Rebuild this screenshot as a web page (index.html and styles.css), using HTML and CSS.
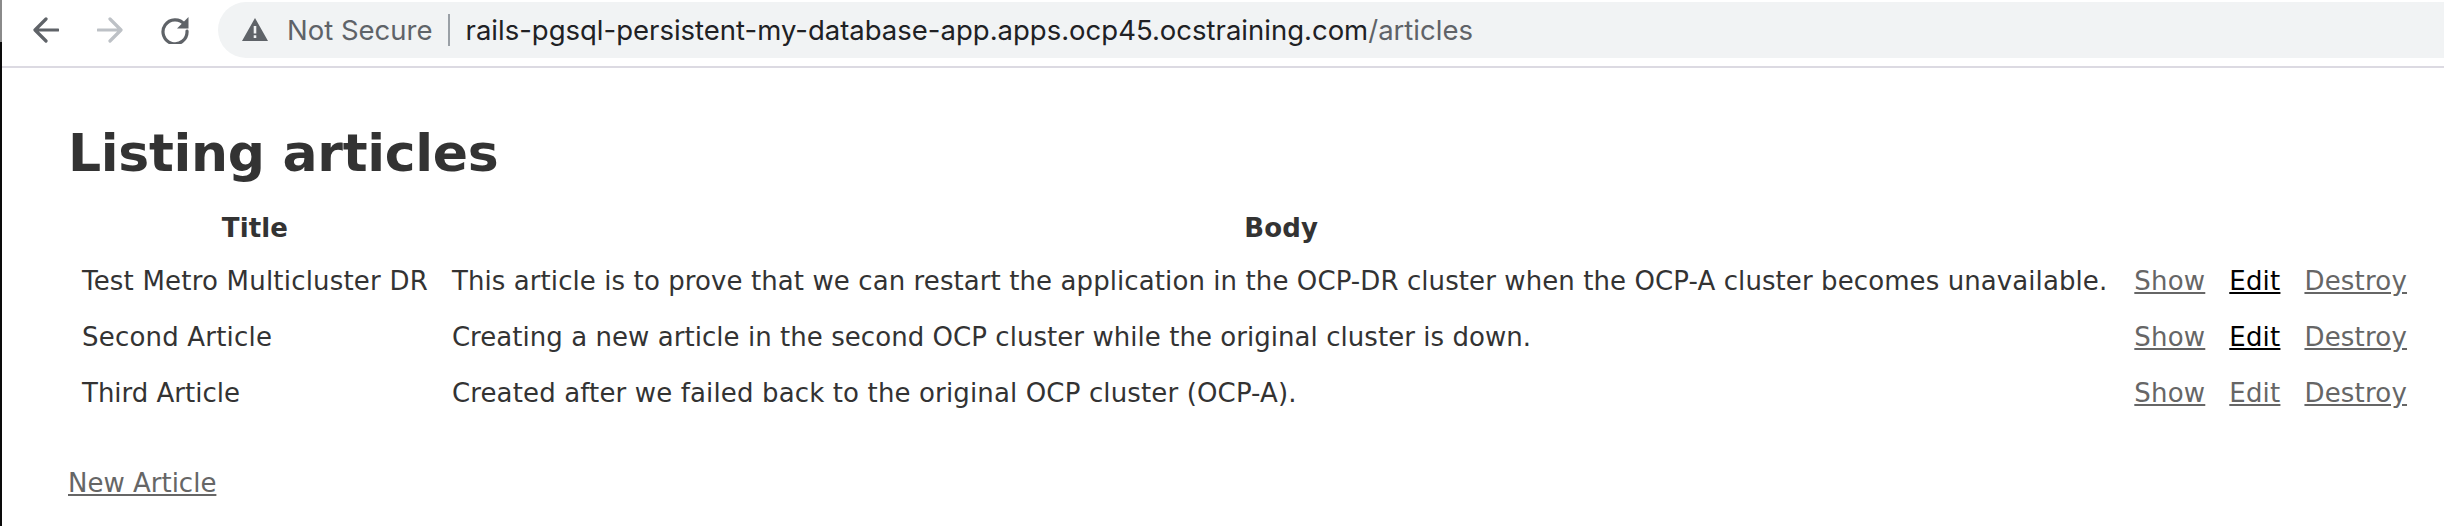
FILE: index.html
```html
<!DOCTYPE html>
<html lang="en">
<head>
<meta charset="utf-8">
<title>Listing articles</title>
<link rel="stylesheet" href="styles.css">
</head>
<body>
<div class="edge"></div>
<header class="toolbar">
  <svg class="nav-icon" viewBox="0 0 26 26" width="26" height="26"><path d="M25 13H2.5M13 2 2 13l11 11" class="stroke dark"/></svg>
  <svg class="nav-icon" viewBox="0 0 26 26" width="26" height="26"><path d="M1 13h22.5M13 2l11 11-11 11" class="stroke light"/></svg>
  <svg class="nav-icon" viewBox="0 0 28 28" width="28" height="28"><path d="M23.6 8.6A12 12 0 1 0 26 15" class="stroke dark"/><path d="M27.5 1v11.5H16z" class="fill-dark"/></svg>
  <div class="omnibox">
    <svg class="warn" viewBox="0 0 26 24" width="26" height="24"><path fill-rule="evenodd" d="M13 0 26 23H0zM11.7 8v7.5h2.6V8zm0 9.2v2.7h2.6v-2.7z" class="fill-dark"/></svg>
    <span class="secure">Not Secure</span>
    <span class="sep"></span>
    <span class="url">rails-pgsql-persistent-my-database-app.apps.ocp45.ocstraining.com<span class="path">/articles</span></span>
  </div>
</header>
<main class="content">
  <h1>Listing articles</h1>
  <table>
    <thead>
      <tr><th>Title</th><th>Body</th><th></th><th></th><th></th></tr>
    </thead>
    <tbody>
      <tr>
        <td class="title">Test Metro Multicluster DR</td>
        <td class="body-a">This article is to prove that we can restart the application in the OCP-DR cluster when the OCP-A cluster becomes unavailable.</td>
        <td class="action"><a href="#">Show</a></td>
        <td class="action"><a href="#" class="visited">Edit</a></td>
        <td class="action"><a href="#">Destroy</a></td>
      </tr>
      <tr>
        <td class="title">Second Article</td>
        <td class="body-b">Creating a new article in the second OCP cluster while the original cluster is down.</td>
        <td class="action"><a href="#">Show</a></td>
        <td class="action"><a href="#" class="visited">Edit</a></td>
        <td class="action"><a href="#">Destroy</a></td>
      </tr>
      <tr>
        <td class="title-c">Third Article</td>
        <td class="body-c">Created after we failed back to the original OCP cluster (OCP-A).</td>
        <td class="action"><a href="#">Show</a></td>
        <td class="action"><a href="#">Edit</a></td>
        <td class="action"><a href="#">Destroy</a></td>
      </tr>
    </tbody>
  </table>
  <p class="new"><a href="#">New Article</a></p>
</main>
</body>
</html>
```
FILE: styles.css
```css
html, body { margin: 0; padding: 0; background: #fff; height: 100%; overflow: hidden; }
body { font-family: "DejaVu Sans", sans-serif; color: #333; position: relative; }
.edge { position: absolute; left: 0; top: 0; bottom: 0; width: 2px; background: linear-gradient(#8a8a8a 0 42px, #0a0a0a 42px); z-index: 2; }
.toolbar { height: 60px; padding: 0 0 6px 33px; border-bottom: 2px solid #dcdae2; display: flex; align-items: center; }
.nav-icon { flex: none; margin-right: 38px; }
.nav-icon:nth-child(3) { margin-right: 29px; }
.stroke { fill: none; stroke-width: 3.2; stroke-linecap: round; stroke-linejoin: round; }
.dark { stroke: #5f6368; }
.light { stroke: #bdc1c6; }
.fill-dark { fill: #5f6368; }
.omnibox { flex: 1; height: 56px; background: #f1f3f4; border-radius: 28px 0 0 28px; display: flex; align-items: center; padding-left: 24px; font-family: Inter, sans-serif; font-size: 27.5px; }
.warn { flex: none; margin-right: 19px; }
.secure { color: #5f6368; }
.sep { width: 2px; height: 32px; background: #9aa0a6; margin: 0 16px 0 15px; }
.url { color: #202124; }
.path { color: #5f6368; }
.content { padding: 0 0 0 68px; }
h1 { font-size: 52px; letter-spacing: -.3px; line-height: 64px; font-weight: bold; margin: 53px 0 0; color: #333; }
table { border-spacing: 4px; margin-top: 21px; font-size: 26px; line-height: 36px; letter-spacing: .12px; }
th { padding: 0 10px 13px; font-weight: bold; text-align: center; }
td { padding: 0 10px 16px; }
.title { letter-spacing: .2px; }
.title-c { letter-spacing: 0; }
.body-a { letter-spacing: .09px; padding-right: 13px; }
.body-b { letter-spacing: .05px; }
.body-c { letter-spacing: .14px; }
.action { letter-spacing: .2px; }
a { color: #666; }
a.visited { color: #000; }
.new { margin: 34px 0 0; font-size: 26px; line-height: 36px; letter-spacing: 0; }
```
